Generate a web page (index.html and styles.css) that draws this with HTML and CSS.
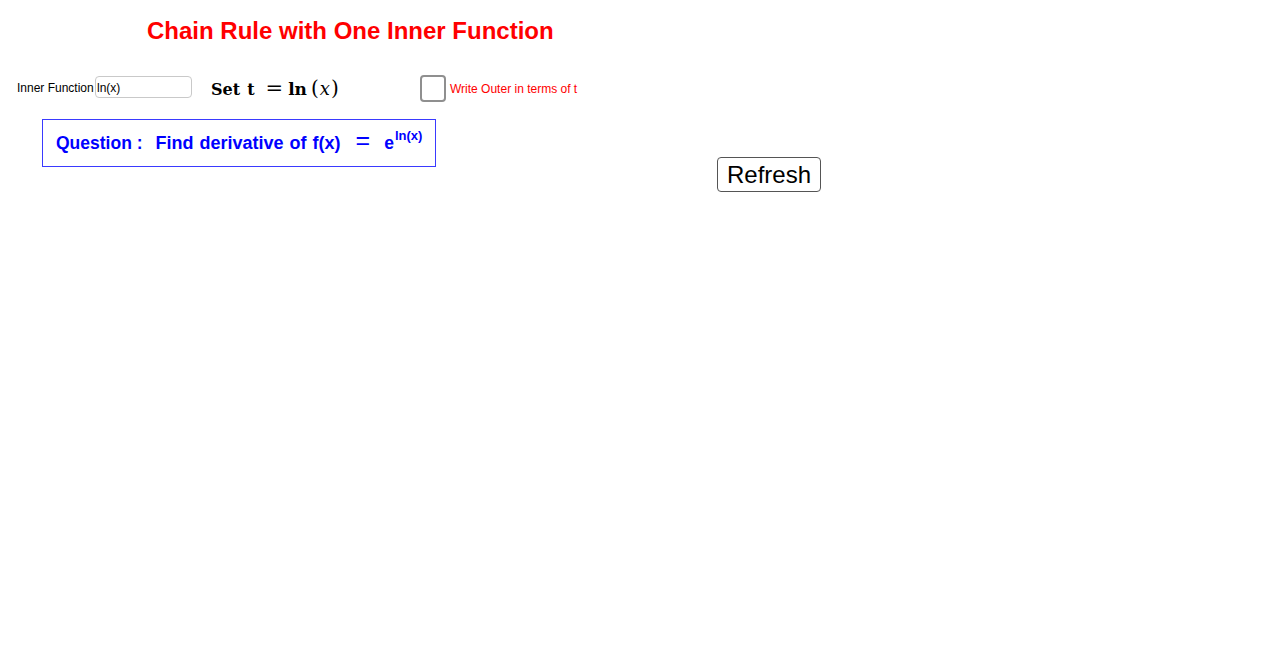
FILE: index.html
```html
<!DOCTYPE html>
<html lang="en">
<head>
<meta charset="utf-8">
<title>Chain Rule with One Inner Function</title>
<link rel="stylesheet" href="styles.css">
</head>
<body>
<div class="app">
  <h1 class="title">Chain Rule with One Inner Function</h1>
  <div class="controls">
    <label class="inner-label">Inner Function</label>
    <div class="input-box">ln(x)</div>
    <div class="math">
      <span class="m-bold">Set</span>
      <span class="m-bold m-t">t</span>
      <span class="m-eq">=</span>
      <span class="m-bold m-ln">ln</span>
      <span class="m-paren m-open">(</span><span class="m-x">x</span><span class="m-paren">)</span>
    </div>
    <div class="checkbox"></div>
    <span class="check-label">Write Outer in terms of t</span>
  </div>
  <div class="lower">
    <div class="question">
      <span class="q-word">Question :</span>
      <span class="q-word q-find">Find derivative of f(x)</span>
      <span class="q-eq">=</span>
      <span class="q-exp">e<sup class="q-sup">ln(x)</sup></span>
    </div>
    <button class="refresh">Refresh</button>
  </div>
</div>
</body>
</html>
```

FILE: styles.css
```css
html, body {
  margin: 0;
  padding: 0;
  background: #ffffff;
}

.app {
  width: 1281px;
  height: 671px;
  font-family: "Liberation Sans", Arial, sans-serif;
  overflow: hidden;
}

.title {
  margin: 17px 0 0 147px;
  font-size: 24px;
  line-height: 28px;
  font-weight: bold;
  color: #ff0000;
}

.controls {
  display: flex;
  align-items: flex-start;
  margin-top: 30px;
  height: 27px;
}

.inner-label {
  margin: 6px 0 0 17px;
  font-size: 12px;
  line-height: 14px;
  color: #000;
  width: 78px;
  white-space: nowrap;
}

.input-box {
  box-sizing: border-box;
  margin-top: 1px;
  width: 97px;
  height: 22px;
  border: 1px solid #c9c9c9;
  border-radius: 4px;
  padding: 4px 0 0 1px;
  font-size: 12px;
  line-height: 14px;
  color: #000;
}

.math {
  display: flex;
  align-items: baseline;
  box-sizing: border-box;
  width: 209px;
  margin: 3px 0 0 19px;
  font-family: "DejaVu Serif", "Liberation Serif", serif;
  font-size: 16px;
  line-height: 20px;
  color: #000;
}

.m-bold { font-weight: bold; }
.m-t { margin-left: 7px; }
.m-eq { margin-left: 11px; font-size: 21px; }
.m-ln { margin-left: 5px; font-size: 17px; }
.m-paren { font-size: 20px; }
.m-open { margin-left: 4px; }
.m-x { font-style: italic; font-size: 18px; margin: 0 1px; }

.checkbox {
  box-sizing: border-box;
  width: 26px;
  height: 27px;
  border: 2px solid #8f8f8f;
  border-radius: 4px;
  background: #fff;
}

.check-label {
  margin: 7px 0 0 4px;
  font-size: 12px;
  line-height: 14px;
  color: #ff0000;
  white-space: nowrap;
}

.lower {
  display: flex;
  align-items: flex-start;
  margin-top: 17px;
}

.question {
  box-sizing: border-box;
  display: flex;
  align-items: baseline;
  margin-left: 42px;
  width: 394px;
  height: 48px;
  border: 1px solid #3a3aff;
  padding: 10px 0 0 13px;
  font-size: 17.5px;
  line-height: 20px;
  font-weight: bold;
  color: #0000ff;
  white-space: nowrap;
}

.q-find { margin-left: 13px; font-size: 18px; word-spacing: 1px; }
.q-eq { margin-left: 15px; font-size: 25px; font-weight: normal; }
.q-exp { margin-left: 14px; }
.q-sup {
  font-size: 13px;
  line-height: 0;
  vertical-align: 9px;
  margin-left: 1px;
}

.refresh {
  box-sizing: border-box;
  margin: 38px 0 0 281px;
  width: 104px;
  height: 35px;
  padding: 0;
  border: 1px solid #555;
  border-radius: 4px;
  background: #fff;
  font-family: "Liberation Sans", Arial, sans-serif;
  font-size: 24px;
  line-height: 30px;
  color: #000;
}
```
